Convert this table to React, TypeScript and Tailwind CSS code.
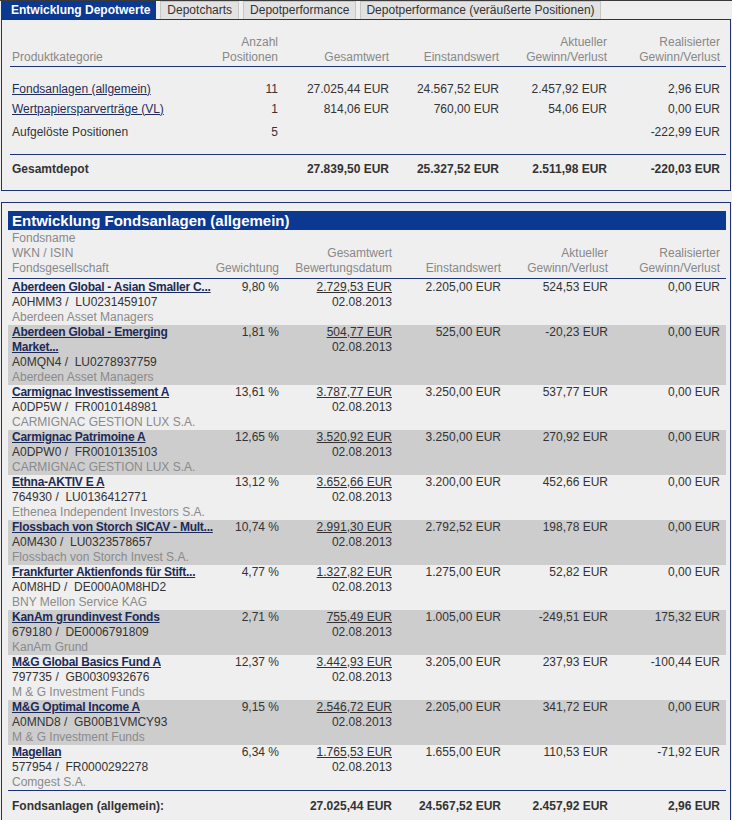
import React from "react";

type Fund = {
  name: string[];
  wkn: string;
  co: string;
  gew: string;
  ges: string;
  ein: string;
  akt: string;
  real: string;
};

const funds: Fund[] = [
  { name: ["Aberdeen Global - Asian Smaller C..."], wkn: "A0HMM3 /\u00a0 LU0231459107", co: "Aberdeen Asset Managers", gew: "9,80 %", ges: "2.729,53 EUR", ein: "2.205,00 EUR", akt: "524,53 EUR", real: "0,00 EUR" },
  { name: ["Aberdeen Global - Emerging", "Market..."], wkn: "A0MQN4 /\u00a0 LU0278937759", co: "Aberdeen Asset Managers", gew: "1,81 %", ges: "504,77 EUR", ein: "525,00 EUR", akt: "-20,23 EUR", real: "0,00 EUR" },
  { name: ["Carmignac Investissement A"], wkn: "A0DP5W /\u00a0 FR0010148981", co: "CARMIGNAC GESTION LUX S.A.", gew: "13,61 %", ges: "3.787,77 EUR", ein: "3.250,00 EUR", akt: "537,77 EUR", real: "0,00 EUR" },
  { name: ["Carmignac Patrimoine A"], wkn: "A0DPW0 /\u00a0 FR0010135103", co: "CARMIGNAC GESTION LUX S.A.", gew: "12,65 %", ges: "3.520,92 EUR", ein: "3.250,00 EUR", akt: "270,92 EUR", real: "0,00 EUR" },
  { name: ["Ethna-AKTIV E A"], wkn: "764930 /\u00a0 LU0136412771", co: "Ethenea Independent Investors S.A.", gew: "13,12 %", ges: "3.652,66 EUR", ein: "3.200,00 EUR", akt: "452,66 EUR", real: "0,00 EUR" },
  { name: ["Flossbach von Storch SICAV - Mult..."], wkn: "A0M430 /\u00a0 LU0323578657", co: "Flossbach von Storch Invest S.A.", gew: "10,74 %", ges: "2.991,30 EUR", ein: "2.792,52 EUR", akt: "198,78 EUR", real: "0,00 EUR" },
  { name: ["Frankfurter Aktienfonds für Stift..."], wkn: "A0M8HD /\u00a0 DE000A0M8HD2", co: "BNY Mellon Service KAG", gew: "4,77 %", ges: "1.327,82 EUR", ein: "1.275,00 EUR", akt: "52,82 EUR", real: "0,00 EUR" },
  { name: ["KanAm grundinvest Fonds"], wkn: "679180 /\u00a0 DE0006791809", co: "KanAm Grund", gew: "2,71 %", ges: "755,49 EUR", ein: "1.005,00 EUR", akt: "-249,51 EUR", real: "175,32 EUR" },
  { name: ["M&G Global Basics Fund A"], wkn: "797735 /\u00a0 GB0030932676", co: "M & G Investment Funds", gew: "12,37 %", ges: "3.442,93 EUR", ein: "3.205,00 EUR", akt: "237,93 EUR", real: "-100,44 EUR" },
  { name: ["M&G Optimal Income A"], wkn: "A0MND8 /\u00a0 GB00B1VMCY93", co: "M & G Investment Funds", gew: "9,15 %", ges: "2.546,72 EUR", ein: "2.205,00 EUR", akt: "341,72 EUR", real: "0,00 EUR" },
  { name: ["Magellan"], wkn: "577954 /\u00a0 FR0000292278", co: "Comgest S.A.", gew: "6,34 %", ges: "1.765,53 EUR", ein: "1.655,00 EUR", akt: "110,53 EUR", real: "-71,92 EUR" },
];

const topGrid = "grid grid-cols-[208px_58px_111px_110px_108px_113px]";
const fundGrid = "grid grid-cols-[203px_64px_113px_109px_107px_112px]";

export default function App() {
  return (
    <div className="min-h-[820px] w-[732px] bg-[#efefef] border-t border-[#3a3a3a] font-['Liberation_Sans',Arial,sans-serif] text-[12px] leading-[15px] text-[#333]">
      {/* Tabs */}
      <div className="flex gap-[4px] pl-[1px] h-[18px]">
        <div className="bg-[#0b3891] text-white font-bold pl-[10px] pr-[6px] leading-[18px] whitespace-nowrap">
          Entwicklung Depotwerte
        </div>
        <div className="bg-[#e2e2e2] border border-b-0 border-[#c6c6c6] px-[6px] leading-[17px] whitespace-nowrap text-[#333]">
          Depotcharts
        </div>
        <div className="bg-[#e2e2e2] border border-b-0 border-[#c6c6c6] px-[6px] leading-[17px] whitespace-nowrap text-[#333]">
          Depotperformance
        </div>
        <div className="bg-[#e2e2e2] border border-b-0 border-[#c6c6c6] px-[5px] leading-[17px] whitespace-nowrap text-[#333]">
          Depotperformance (veräußerte Positionen)
        </div>
      </div>

      {/* Top panel */}
      <div className="mx-[1px] border border-[#1d3276] pl-[8px] pr-[4px] pt-[15px] pb-[11px]">
        <div className={`${topGrid} pl-[2px] text-[#888] border-b border-[#1d3276] pb-[1px]`}>
          <div className="self-end">Produktkategorie</div>
          <div className="text-right self-end">Anzahl<br />Positionen</div>
          <div className="text-right self-end">Gesamtwert</div>
          <div className="text-right self-end">Einstandswert</div>
          <div className="text-right self-end">Aktueller<br />Gewinn/Verlust</div>
          <div className="text-right self-end">Realisierter<br />Gewinn/Verlust</div>
        </div>
        <div className={`${topGrid} pl-[2px] mt-[12px] h-[20px] items-center`}>
          <div className="underline text-[#1f2d5c]">Fondsanlagen (allgemein)</div>
          <div className="text-right">11</div>
          <div className="text-right">27.025,44 EUR</div>
          <div className="text-right">24.567,52 EUR</div>
          <div className="text-right">2.457,92 EUR</div>
          <div className="text-right">2,96 EUR</div>
        </div>
        <div className={`${topGrid} pl-[2px] h-[20px] items-center`}>
          <div className="underline text-[#1f2d5c]">Wertpapiersparverträge (VL)</div>
          <div className="text-right">1</div>
          <div className="text-right">814,06 EUR</div>
          <div className="text-right">760,00 EUR</div>
          <div className="text-right">54,06 EUR</div>
          <div className="text-right">0,00 EUR</div>
        </div>
        <div className={`${topGrid} pl-[2px] mt-[3px] h-[20px] items-center`}>
          <div>Aufgelöste Positionen</div>
          <div className="text-right">5</div>
          <div></div>
          <div></div>
          <div></div>
          <div className="text-right">-222,99 EUR</div>
        </div>
        <div className="mt-[12px] border-b border-[#1d3276]"></div>
        <div className={`${topGrid} pl-[2px] mt-[4px] h-[20px] items-center font-bold`}>
          <div>Gesamtdepot</div>
          <div></div>
          <div className="text-right">27.839,50 EUR</div>
          <div className="text-right">25.327,52 EUR</div>
          <div className="text-right">2.511,98 EUR</div>
          <div className="text-right">-220,03 EUR</div>
        </div>
      </div>

      {/* Second panel */}
      <div className="mx-[1px] mt-[11px] border border-b-0 border-[#1d3276] pl-[6px] pr-[4px] pt-[8px] min-h-[620px]">
        <div className="bg-[#0b3891] text-white font-bold text-[15px] leading-[19px] h-[19px] pl-[4px] whitespace-nowrap">
          Entwicklung Fondsanlagen (allgemein)
        </div>
        <div className={`${fundGrid} pl-[4px] pt-[1px] pb-[2px] text-[#888] border-b border-[#1d3276]`}>
          <div>Fondsname<br />WKN / ISIN<br />Fondsgesellschaft</div>
          <div className="text-right self-end">Gewichtung</div>
          <div className="text-right self-end">Gesamtwert<br />Bewertungsdatum</div>
          <div className="text-right self-end">Einstandswert</div>
          <div className="text-right self-end">Aktueller<br />Gewinn/Verlust</div>
          <div className="text-right self-end">Realisierter<br />Gewinn/Verlust</div>
        </div>
        <div className="pt-[1px]">
          {funds.map((f, i) => (
            <div
              key={i}
              className={`${fundGrid} pl-[4px] ${i % 2 === 1 ? "bg-[#cdcdcd]" : ""}`}
            >
              <div className="whitespace-nowrap">
                {f.name.map((n, j) => (
                  <div key={j} className="font-bold underline text-[#1c2a58] tracking-[-0.25px]">{n}</div>
                ))}
                <div>{f.wkn}</div>
                <div className="text-[#8a8a8a]">{f.co}</div>
              </div>
              <div className="text-right">{f.gew}</div>
              <div className="text-right">
                <div className="underline">{f.ges}</div>
                <div>02.08.2013</div>
              </div>
              <div className="text-right">{f.ein}</div>
              <div className="text-right">{f.akt}</div>
              <div className="text-right">{f.real}</div>
            </div>
          ))}
        </div>
        <div className={`${fundGrid} pl-[4px] border-t border-[#1d3276] pt-[8px] font-bold`}>
          <div>Fondsanlagen (allgemein):</div>
          <div></div>
          <div className="text-right">27.025,44 EUR</div>
          <div className="text-right">24.567,52 EUR</div>
          <div className="text-right">2.457,92 EUR</div>
          <div className="text-right">2,96 EUR</div>
        </div>
      </div>
    </div>
  );
}
